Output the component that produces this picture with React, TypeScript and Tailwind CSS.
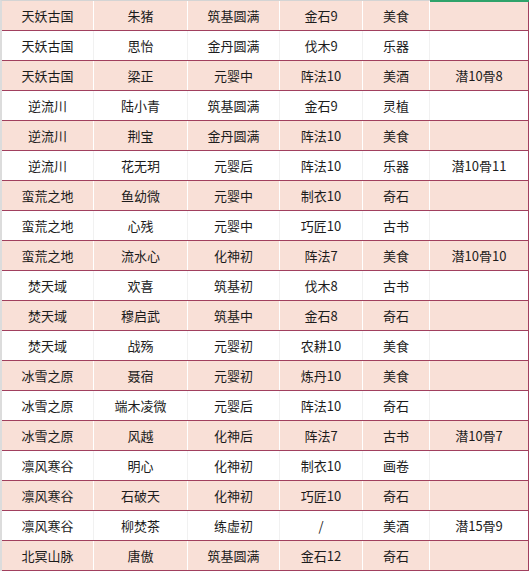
import React from "react";

const rows: string[][] = [
  ["天妖古国", "朱猪", "筑基圆满", "金石9", "美食", ""],
  ["天妖古国", "思怡", "金丹圆满", "伐木9", "乐器", ""],
  ["天妖古国", "梁正", "元婴中", "阵法10", "美酒", "潜10骨8"],
  ["逆流川", "陆小青", "筑基圆满", "金石9", "灵植", ""],
  ["逆流川", "荆宝", "金丹圆满", "阵法10", "美食", ""],
  ["逆流川", "花无玥", "元婴后", "阵法10", "乐器", "潜10骨11"],
  ["蛮荒之地", "鱼幼微", "元婴中", "制衣10", "奇石", ""],
  ["蛮荒之地", "心残", "元婴中", "巧匠10", "古书", ""],
  ["蛮荒之地", "流水心", "化神初", "阵法7", "美食", "潜10骨10"],
  ["焚天域", "欢喜", "筑基初", "伐木8", "古书", ""],
  ["焚天域", "穆启武", "筑基中", "金石8", "奇石", ""],
  ["焚天域", "战殇", "元婴初", "农耕10", "美食", ""],
  ["冰雪之原", "聂宿", "元婴初", "炼丹10", "美食", ""],
  ["冰雪之原", "端木凌微", "元婴后", "阵法10", "奇石", ""],
  ["冰雪之原", "风越", "化神后", "阵法7", "古书", "潜10骨7"],
  ["凛风寒谷", "明心", "化神初", "制衣10", "画卷", ""],
  ["凛风寒谷", "石破天", "化神初", "巧匠10", "奇石", ""],
  ["凛风寒谷", "柳焚茶", "练虚初", "/", "美酒", "潜15骨9"],
  ["北冥山脉", "唐傲", "筑基圆满", "金石12", "奇石", ""],
];

const widths = ["w-[92px]", "w-[94px]", "w-[92px]", "w-[83px]", "w-[67px]", "w-[99px]"];

export default function App() {
  return (
    <main
      className="w-[530px] h-[572px] bg-white text-[13px] text-[#1c1c1c]"
      style={{ fontFamily: '"Noto Sans CJK SC", "Noto Sans", sans-serif' }}
    >
      <div className="relative w-[529px] border-t border-l-2 border-t-[#d4d4d4] border-l-[#dcdcdc]">
        <div className="absolute -top-px left-[428px] w-[99px] h-[2px] bg-[#2fa36b]" />
        {rows.map((row, i) => {
          const pink = i % 2 === 0;
          return (
            <div
              key={i}
              className={`flex h-[30px] border-b border-[#a1405e] ${
                pink ? "bg-[#f9e0d7]" : "bg-white"
              }`}
            >
              {row.map((cell, j) => (
                <div
                  key={j}
                  className={`${widths[j]} h-full flex items-center justify-center border-r ${
                    j === 5
                      ? "border-[#a1405e]"
                      : pink
                      ? "border-white"
                      : "border-[#f1f1f1]"
                  }`}
                >
                  {cell}
                </div>
              ))}
            </div>
          );
        })}
      </div>
    </main>
  );
}
